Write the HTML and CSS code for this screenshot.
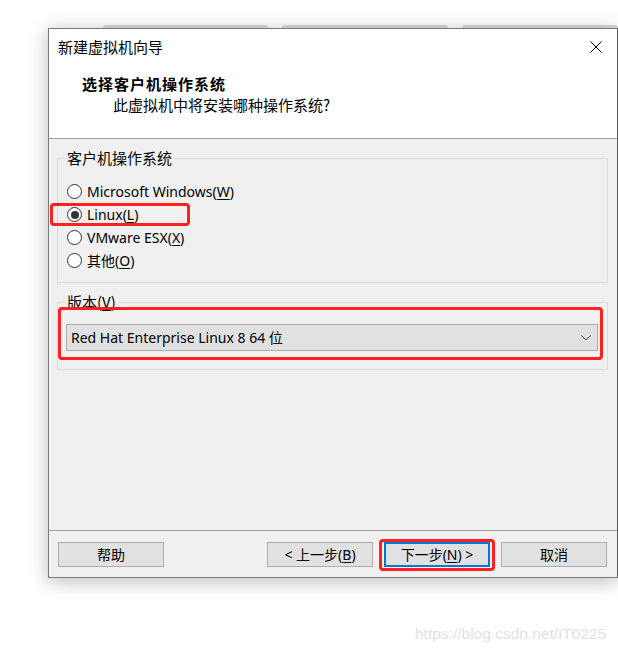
FILE: index.html
```html
<!DOCTYPE html>
<html lang="zh-CN">
<head>
<meta charset="utf-8">
<title>新建虚拟机向导</title>
<link rel="stylesheet" href="styles.css">
</head>
<body>
<div class="desk">
  <div class="tabs">
    <div class="tab t1"></div>
    <div class="tab t2"></div>
    <div class="tab t3"></div>
  </div>
  <div class="win">
    <div class="head">
      <div class="titlebar">
        <span class="title">新建虚拟机向导</span>
        <svg class="close" width="12" height="12" viewBox="0 0 12 12"><path d="M0.5 0.5 L11.5 11.5 M11.5 0.5 L0.5 11.5" stroke="#000" stroke-width="1" fill="none"/></svg>
      </div>
      <div class="h1">选择客户机操作系统</div>
      <div class="h2">此虚拟机中将安装哪种操作系统?</div>
    </div>
    <div class="content">
      <fieldset class="group g1">
        <legend>客户机操作系统</legend>
        <div class="radio"><span class="dot"></span><span class="lbl">Microsoft Windows(<u>W</u>)</span></div>
        <div class="radio checked"><span class="dot"></span><span class="lbl">Linux(<u>L</u>)</span><span class="mark mark-linux"></span></div>
        <div class="radio"><span class="dot"></span><span class="lbl">VMware ESX(<u>X</u>)</span></div>
        <div class="radio"><span class="dot"></span><span class="lbl">其他(<u>O</u>)</span></div>
      </fieldset>
      <fieldset class="group g2">
        <legend>版本(<u>V</u>)</legend>
        <div class="select">
          <span class="sel-text">Red Hat Enterprise Linux 8 64 位</span>
          <svg class="chev" width="10" height="6" viewBox="0 0 10 6"><path d="M0.5 0.5 L5 5 L9.5 0.5" stroke="#444" stroke-width="1" fill="none"/></svg>
          <span class="mark mark-select"></span>
        </div>
      </fieldset>
      <div class="footer">
        <button class="btn">帮助</button>
        <div class="nav">
          <button class="btn">&lt; 上一步(<u>B</u>)</button>
          <div class="next-wrap">
            <button class="btn default">下一步(<u>N</u>) &gt;</button>
            <span class="mark mark-next"></span>
          </div>
          <button class="btn">取消</button>
        </div>
      </div>
    </div>
  </div>
  <div class="watermark">https://blog.csdn.net/IT0225</div>
</div>
</body>
</html>
```

FILE: styles.css
```css
* { box-sizing: border-box; }
html, body { margin: 0; padding: 0; background: #fff; }
body {
  width: 618px;
  height: 653px;
  overflow: hidden;
  font-family: "Segoe UI", "Noto Sans", "Noto Sans CJK SC", sans-serif;
  font-size: 14px;
  color: #000;
}
.desk { padding-top: 25px; }
.tabs {
  display: flex;
  gap: 14px;
  padding-left: 103px;
  height: 3px;
}
.tab {
  height: 3px;
  background: #dadada;
  border-radius: 3px 3px 0 0;
}
.t1 { width: 165px; }
.t2 { width: 166px; }
.t3 { flex: 1; }

.win {
  margin-left: 48px;
  width: 570px;
  height: 550px;
  border: 1px solid #7a7a7a;
  border-right-color: #5a5a5a;
  background: #f0f0f0;
  box-shadow: 0 3px 18px rgba(0,0,0,0.28);
  display: flex;
  flex-direction: column;
  position: relative;
}
.head {
  background: #fff;
  height: 110px;
  border-bottom: 1px solid #a0a0a0;
  padding-top: 8px;
}
.titlebar {
  display: flex;
  justify-content: space-between;
  align-items: center;
  height: 20px;
  padding: 0 15px 0 9px;
}
.title {
  font-family: "Noto Sans CJK SC", sans-serif;
  font-size: 15px;
  line-height: 20px;
}
.h1 {
  margin-top: 17px;
  padding-left: 33px;
  font-family: "Noto Sans CJK SC", sans-serif;
  font-weight: bold;
  font-size: 15px;
  line-height: 20px;
  letter-spacing: 1px;
}
.h2 {
  margin-top: 1px;
  padding-left: 64px;
  font-family: "Noto Sans CJK SC", sans-serif;
  font-size: 15px;
  line-height: 20px;
}
.content {
  flex: 1;
  display: flex;
  flex-direction: column;
  padding-top: 9px;
}
.group {
  margin: 0 9px 0 8px;
  padding: 0;
  border: 1px solid #dcdcdc;
  min-width: 0;
}
.group legend {
  margin-left: 7px;
  padding: 0 2px;
  font-family: "Noto Sans CJK SC", sans-serif;
  font-size: 15px;
  line-height: 20px;
}
.g1 { padding: 12px 0 10px 0; }
.g2 { margin-top: 9px; padding: 12px 0 18px 0; }

.radio {
  position: relative;
  display: flex;
  align-items: center;
  height: 23px;
  padding-left: 9px;
}
.dot {
  width: 15px;
  height: 15px;
  border: 1px solid #333;
  border-radius: 50%;
  background: #fff;
  display: flex;
  align-items: center;
  justify-content: center;
  flex: none;
}
.checked .dot::after {
  content: "";
  width: 8px;
  height: 8px;
  border-radius: 50%;
  background: #333;
}
.lbl {
  margin-left: 5px;
  font-size: 14px;
  line-height: 20px;
}
.lbl u, legend u, .btn u { text-underline-offset: 2px; }

.mark {
  position: absolute;
  border: 3px solid #ff2020;
  border-radius: 4px;
  pointer-events: none;
}
.mark-linux {
  left: -8px;
  top: 0;
  width: 140px;
  height: 23px;
}

.select {
  position: relative;
  margin: 0 9px 0 8px;
  height: 27px;
  background: #e1e1e1;
  border: 1px solid #adadad;
  display: flex;
  align-items: center;
  justify-content: space-between;
  padding: 0 5px 0 4px;
}
.sel-text { font-size: 14px; line-height: 20px; }
.chev { margin-right: 1px; }
.mark-select {
  left: -9px;
  right: -6px;
  top: -18px;
  bottom: -10px;
}

.footer {
  margin-top: auto;
  border-top: 1px solid #a0a0a0;
  padding: 11px 10px 10px 9px;
  display: flex;
  justify-content: space-between;
}
.nav { display: flex; gap: 11px; }
.btn {
  width: 106px;
  height: 25px;
  margin: 0;
  padding: 0;
  background: #e1e1e1;
  border: 1px solid #adadad;
  font-family: "Segoe UI", "Noto Sans", "Noto Sans CJK SC", sans-serif;
  font-size: 14px;
  line-height: 20px;
  color: #000;
}
.btn.default { border: 2px solid #0078d7; }
.next-wrap { position: relative; display: flex; }
.mark-next {
  left: -5px;
  right: -5px;
  top: -3px;
  bottom: -4px;
}

.watermark {
  margin-top: 46px;
  padding-left: 415px;
  font-family: "Liberation Sans", Arial, sans-serif;
  font-size: 15.5px;
  color: #e2e2e2;
  line-height: 20px;
}
```
